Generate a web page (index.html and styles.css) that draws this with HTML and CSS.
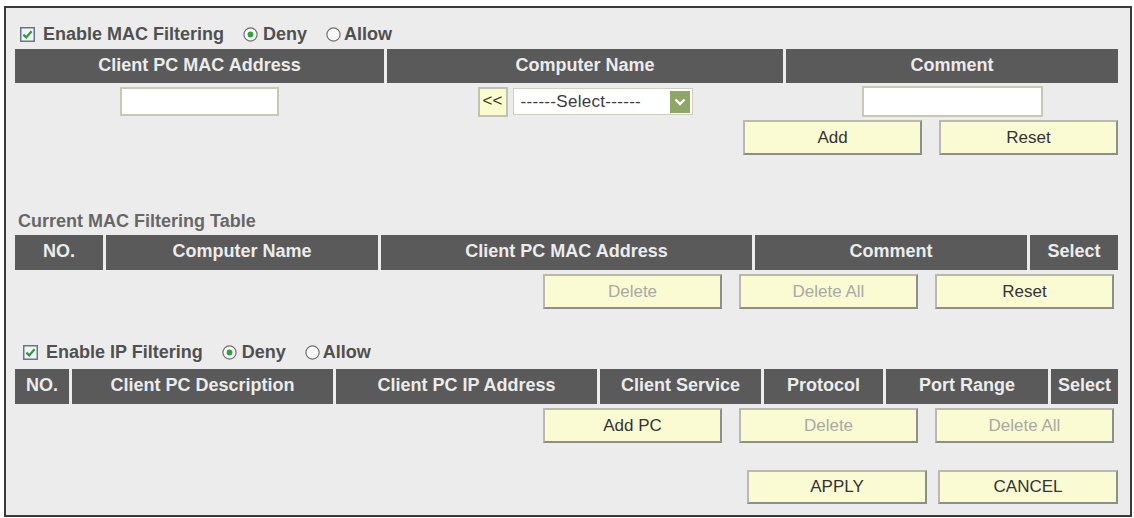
FILE: index.html
```html
<!DOCTYPE html>
<html lang="en">
<head>
<meta charset="utf-8">
<title>MAC / IP Filtering</title>
<link rel="stylesheet" href="styles.css">
</head>
<body>
<div class="frame">
  <div class="opt-row opt-mac">
    <span class="cb"><svg viewBox="0 0 15 15" width="15" height="15"><rect x="0.75" y="0.75" width="13.5" height="13.5" fill="#f4f4f4" stroke="#66748f" stroke-width="1.5"/><path d="M3.4 7.6 L6.2 10.4 L11.6 4.2" fill="none" stroke="#2d9a3a" stroke-width="2.2"/></svg></span>
    <span class="opt-label">Enable MAC Filtering</span>
    <span class="radio"><svg viewBox="0 0 15 15" width="15" height="15"><circle cx="7.5" cy="7.5" r="6.6" fill="#fafafa" stroke="#6f6f6f" stroke-width="1.2"/><circle cx="7.5" cy="7.5" r="2.9" fill="#33a03b"/></svg></span>
    <span class="opt-label">Deny</span>
    <span class="radio radio-tight"><svg viewBox="0 0 15 15" width="15" height="15"><circle cx="7.5" cy="7.5" r="6.6" fill="#fafafa" stroke="#6f6f6f" stroke-width="1.2"/></svg></span>
    <span class="opt-label">Allow</span>
  </div>

  <div class="thead cols-mac">
    <div class="th">Client PC MAC Address</div>
    <div class="th">Computer Name</div>
    <div class="th">Comment</div>
  </div>

  <div class="input-row cols-mac">
    <div class="cell"><input class="txt txt-mac" type="text"></div>
    <div class="cell">
      <button class="mini" type="button">&lt;&lt;</button>
      <div class="select">
        <span class="select-text">------Select------</span>
        <span class="select-arrow"><svg viewBox="0 0 20 22" width="20" height="22"><rect width="20" height="22" fill="#8ea766"/><path d="M5.5 8.5 L10 13 L14.5 8.5" fill="none" stroke="#ffffff" stroke-width="2.4"/></svg></span>
      </div>
    </div>
    <div class="cell"><input class="txt txt-comment" type="text"></div>
  </div>

  <div class="btn-row">
    <button class="btn" type="button">Add</button>
    <button class="btn" type="button">Reset</button>
  </div>

  <div class="title">Current MAC Filtering Table</div>

  <div class="thead cols-tbl">
    <div class="th">NO.</div>
    <div class="th">Computer Name</div>
    <div class="th">Client PC MAC Address</div>
    <div class="th">Comment</div>
    <div class="th">Select</div>
  </div>

  <div class="btn-row btn-row-inset">
    <button class="btn is-disabled" type="button">Delete</button>
    <button class="btn is-disabled" type="button">Delete All</button>
    <button class="btn" type="button">Reset</button>
  </div>

  <div class="opt-row opt-ip">
    <span class="cb"><svg viewBox="0 0 15 15" width="15" height="15"><rect x="0.75" y="0.75" width="13.5" height="13.5" fill="#f4f4f4" stroke="#66748f" stroke-width="1.5"/><path d="M3.4 7.6 L6.2 10.4 L11.6 4.2" fill="none" stroke="#2d9a3a" stroke-width="2.2"/></svg></span>
    <span class="opt-label">Enable IP Filtering</span>
    <span class="radio"><svg viewBox="0 0 15 15" width="15" height="15"><circle cx="7.5" cy="7.5" r="6.6" fill="#fafafa" stroke="#6f6f6f" stroke-width="1.2"/><circle cx="7.5" cy="7.5" r="2.9" fill="#33a03b"/></svg></span>
    <span class="opt-label">Deny</span>
    <span class="radio radio-tight"><svg viewBox="0 0 15 15" width="15" height="15"><circle cx="7.5" cy="7.5" r="6.6" fill="#fafafa" stroke="#6f6f6f" stroke-width="1.2"/></svg></span>
    <span class="opt-label">Allow</span>
  </div>

  <div class="thead cols-ip">
    <div class="th">NO.</div>
    <div class="th">Client PC Description</div>
    <div class="th">Client PC IP Address</div>
    <div class="th">Client Service</div>
    <div class="th">Protocol</div>
    <div class="th">Port Range</div>
    <div class="th">Select</div>
  </div>

  <div class="btn-row btn-row-inset">
    <button class="btn" type="button">Add PC</button>
    <button class="btn is-disabled" type="button">Delete</button>
    <button class="btn is-disabled" type="button">Delete All</button>
  </div>

  <div class="btn-row btn-row-final">
    <button class="btn btn-wide" type="button">APPLY</button>
    <button class="btn btn-wide" type="button">CANCEL</button>
  </div>
</div>
</body>
</html>
```

FILE: styles.css
```css
* {
  box-sizing: border-box;
}

html, body {
  margin: 0;
  padding: 0;
  background: #ffffff;
}

body {
  font-family: "Liberation Sans", Arial, sans-serif;
  width: 1134px;
  height: 518px;
  overflow: hidden;
}

.frame {
  margin: 6px 0 0 4px;
  width: 1128px;
  height: 511px;
  border: 2px solid #3a3a3a;
  background: #ececec;
  padding: 18px 12px 0 9px;
  display: flex;
  flex-direction: column;
}

/* option rows (checkbox + radios) */
.opt-row {
  height: 16px;
  display: flex;
  align-items: center;
  font-size: 18px;
  font-weight: bold;
  color: #505050;
  line-height: 16px;
}

.opt-mac {
  padding-left: 5px;
}

.opt-ip {
  margin-top: 35px;
  padding-left: 8px;
}

.cb {
  display: flex;
  flex: none;
  width: 15px;
  height: 15px;
  margin-right: 8px;
}

.radio {
  display: flex;
  flex: none;
  width: 15px;
  height: 15px;
  margin-left: 19px;
  margin-right: 5px;
}

.radio-tight {
  margin-right: 3px;
}

.opt-label {
  white-space: nowrap;
}

/* header bars */
.thead {
  display: grid;
  column-gap: 3px;
  height: 35px;
  margin-top: 4px;
}

.opt-row + .thead {
  margin-top: 7px;
}

.opt-ip + .thead {
  margin-top: 9px;
}

.cols-mac {
  grid-template-columns: 369px 396px 1fr;
}

.cols-mac.thead {
  height: 34px;
}

.cols-tbl {
  grid-template-columns: 88px 272px 371px 272px 1fr;
}

.cols-ip {
  grid-template-columns: 54px 261px 261px 161px 119px 162px 1fr;
}

.th {
  background: #5a5a5a;
  color: #ececec;
  font-size: 18px;
  font-weight: bold;
  display: flex;
  align-items: center;
  justify-content: center;
  padding-bottom: 2px;
  white-space: nowrap;
  overflow: hidden;
}

/* input row */
.input-row {
  display: grid;
  column-gap: 3px;
  height: 31px;
  margin-top: 3px;
}

.cell {
  display: flex;
  align-items: center;
  justify-content: center;
}

.txt {
  background: #ffffff;
  border: 2px solid #c9c9b2;
  padding: 0 4px;
  font-family: inherit;
  font-size: 16px;
  margin: 0;
  outline: none;
}

.txt-mac {
  width: 159px;
  height: 29px;
}

.txt-comment {
  width: 181px;
  height: 31px;
}

.mini {
  width: 30px;
  height: 30px;
  margin: 0 5px 0 0;
  padding: 0 0 2px;
  background: #fbfbd0;
  border: 2px solid #c2c2b4;
  color: #34341c;
  font-family: inherit;
  font-size: 17px;
  line-height: 1;
}

.select {
  width: 180px;
  height: 27px;
  background: #ffffff;
  border: 1px solid #cfcfbd;
  display: flex;
  align-items: center;
  justify-content: space-between;
  padding: 0 2px 0 7px;
}

.select-text {
  font-size: 17px;
  color: #3a3a3a;
  white-space: nowrap;
  letter-spacing: 0.3px;
}

.select-arrow {
  display: flex;
  width: 20px;
  height: 22px;
}

/* buttons */
.btn-row {
  display: flex;
  justify-content: flex-end;
  column-gap: 17px;
  margin-top: 3px;
}

.btn-row-inset {
  margin-top: 4px;
  padding-right: 4px;
}

.btn-row-final {
  margin-top: 27px;
  column-gap: 11px;
}

.btn {
  width: 179px;
  height: 35px;
  margin: 0;
  padding: 0 0 1px;
  background: #fbfbd3;
  border: 2px solid;
  border-color: #b9b9b0 #8f8f8a #8f8f8a #b9b9b0;
  color: #333333;
  font-family: inherit;
  font-size: 17px;
  line-height: 1;
}

.btn-wide {
  width: 180px;
  height: 34px;
}

.btn.is-disabled {
  color: #a9a9a3;
}

.title {
  margin-top: 56px;
  height: 20px;
  line-height: 20px;
  font-size: 18px;
  font-weight: bold;
  color: #676767;
  padding-left: 3px;
}

.title + .thead {
  margin-top: 4px;
}
```
